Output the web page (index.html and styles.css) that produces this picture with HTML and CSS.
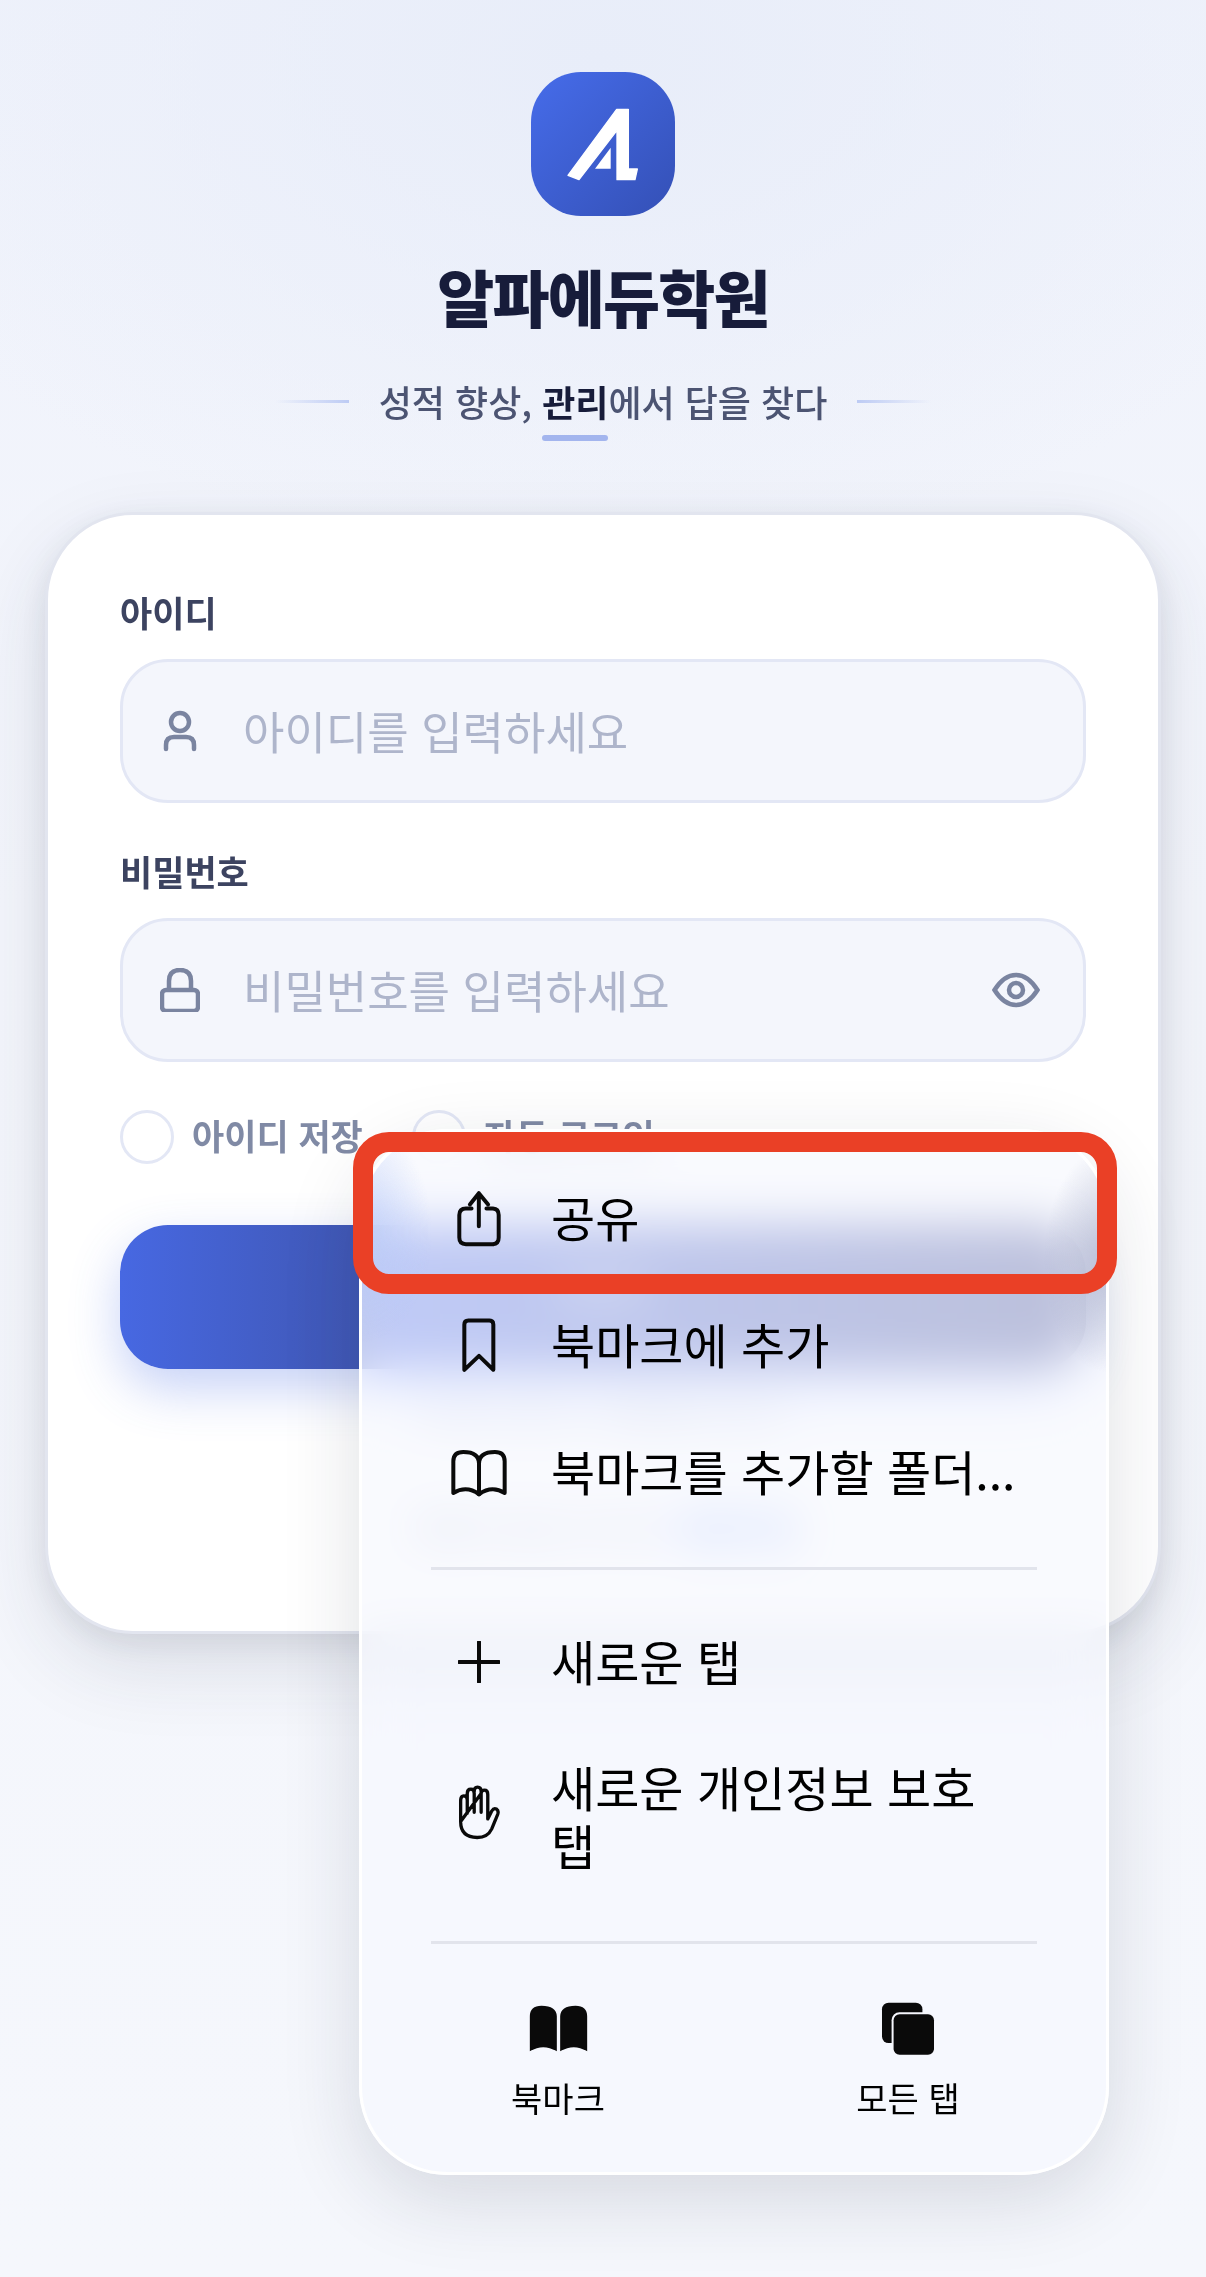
FILE: index.html
```html
<!DOCTYPE html>
<html lang="ko">
<head>
    <meta charset="UTF-8">
    <meta name="viewport" content="width=device-width, initial-scale=1.0">
    <title>알파에듀학원</title>
    <link rel="stylesheet" href="styles.css">
</head>
<body>
    <div class="page">
        <header class="brand">
            <div class="logo">
                <svg viewBox="93 65 432 432" width="144" height="144">
                    <path fill="#fff" stroke="#fff" stroke-width="4" stroke-linejoin="round" d="M350 177H385V356H412L405 388H351V240L237 388L204 375Z"/>
                    <path fill="#fff" d="M332 292V355H285Z"/>
                </svg>
            </div>
            <h1 class="brand-name">알파에듀학원</h1>
            <div class="tagline">
                <span class="tagline-line"></span>
                <p class="tagline-text">성적 향상, <strong class="mark">관리</strong>에서 답을 찾다</p>
                <span class="tagline-line flip"></span>
            </div>
        </header>

        <main class="card">
            <label class="field-label">아이디</label>
            <div class="field">
                <svg class="field-icon" viewBox="0 0 40 44" width="40" height="44">
                    <circle cx="20" cy="13" r="9" fill="none" stroke="#7a84a0" stroke-width="4.5"/>
                    <path d="M6 40V36Q6 28 14 28H26Q34 28 34 36V40" fill="none" stroke="#7a84a0" stroke-width="4.5" stroke-linecap="round"/>
                </svg>
                <span class="placeholder">아이디를 입력하세요</span>
            </div>

            <label class="field-label second">비밀번호</label>
            <div class="field">
                <svg class="field-icon" viewBox="0 0 40 44" width="40" height="44">
                    <rect x="2" y="22" width="36" height="21" rx="4" fill="none" stroke="#7a84a0" stroke-width="4.5"/>
                    <path d="M9 22V13Q9 2 20 2Q31 2 31 13V22" fill="none" stroke="#7a84a0" stroke-width="4.5"/>
                </svg>
                <span class="placeholder">비밀번호를 입력하세요</span>
                <svg class="eye-icon" viewBox="0 0 48 36" width="48" height="36">
                    <path d="M2.500 18Q12 3 24 3Q36 3 45.500 18Q36 33 24 33Q12 33 2.500 18Z" fill="none" stroke="#7a84a0" stroke-width="4.500"/>
                    <circle cx="24" cy="18" r="7" fill="none" stroke="#7a84a0" stroke-width="4.500"/>
                </svg>
            </div>

            <div class="options">
                <span class="radio"></span><span class="option-text">아이디 저장</span>
                <span class="radio auto"></span><span class="option-text">자동 로그인</span>
            </div>

            <button class="login-button">로그인</button>

            <div class="sub-links">아이디 찾기 | 비밀번호 찾기</div>
            <div class="sub-links join">계정이 없으신가요? <strong class="join-link">회원가입</strong></div>
        </main>

        <nav class="menu">
            <a class="menu-row">
                <span class="menu-icon">
                    <svg viewBox="375 210 145 180" width="48" height="60" class="line-icon">
                        <path d="M425 268H408Q388 268 388 288V356Q388 376 408 376H488Q507 376 507 356V288Q507 268 488 268H470"/>
                        <path d="M447 322V222M420 256L447 222L475 256"/>
                    </svg>
                </span>
                <span class="row-text">공유</span>
            </a>
            <a class="menu-row">
                <span class="menu-icon">
                    <svg viewBox="390 600 114 170" width="38" height="57" class="line-icon">
                        <path d="M403 758V622Q403 610 415 610H478Q490 610 490 622V758L447 716Z"/>
                    </svg>
                </span>
                <span class="row-text">북마크에 추가</span>
            </a>
            <a class="menu-row">
                <span class="menu-icon">
                    <svg viewBox="60 28 174 144" width="58" height="48" class="line-icon">
                        <path d="M70 160V65Q70 37 100 37Q147 37 147 72Q147 37 195 37Q224 37 224 65V160Q185 136 147 164Q110 136 70 160Z"/>
                        <path d="M147 72V164"/>
                    </svg>
                </span>
                <span class="row-text">북마크를 추가할 폴더...</span>
            </a>
            <div class="menu-divider"></div>
            <a class="menu-row upper">
                <span class="menu-icon">
                    <svg viewBox="0 0 42 42" width="42" height="42" class="plus-icon">
                        <path d="M1 21H41M21 1V41"/>
                    </svg>
                </span>
                <span class="row-text">새로운 탭</span>
            </a>
            <a class="menu-row tall">
                <span class="menu-icon">
                    <svg viewBox="90 180 130 165" width="43" height="55" class="hand-icon">
                        <path d="M98 290V228Q98 212 108 212Q118 212 118 225M118 265V205Q118 192 129 192Q139 192 139 205V262M139 200Q139 186 149 186Q160 186 160 200V262M160 205Q160 195 170 195Q180 195 180 208V282L192 258Q198 248 206 252Q214 257 210 268L192 312Q180 338 148 338Q98 338 98 290Z"/>
                    </svg>
                </span>
                <span class="row-text">새로운 개인정보 보호<br>탭</span>
            </a>
            <div class="menu-divider last"></div>
            <div class="menu-bottom">
                <a class="bottom-item">
                    <span class="bottom-icon">
                        <svg viewBox="88 76 176 141" width="59" height="47">
                            <path fill="#0a0a0a" d="M90 215V110Q90 78 125 78Q170 78 171 110V215Q130 190 90 215Z"/>
                            <path fill="#0a0a0a" d="M262 215V110Q262 78 227 78Q182 78 181 110V215Q222 190 262 215Z"/>
                        </svg>
                    </span>
                    <span class="bottom-label">북마크</span>
                </a>
                <a class="bottom-item">
                    <span class="bottom-icon">
                        <svg viewBox="1148 68 161 160" width="54" height="53">
                            <rect x="1150" y="70" width="122" height="122" rx="20" fill="#0a0a0a"/>
                            <rect x="1179" y="99" width="134" height="133" rx="24" fill="#f6f7fd"/>
                            <rect x="1185" y="105" width="122" height="122" rx="18" fill="#0a0a0a"/>
                        </svg>
                    </span>
                    <span class="bottom-label">모든 탭</span>
                </a>
            </div>
        </nav>

        <div class="callout"></div>
    </div>
</body>
</html>
```

FILE: styles.css
```css
* {
    box-sizing: border-box;
}
body {
    margin: 0;
    font-family: "Noto Sans CJK KR", "Noto Sans", sans-serif;
}
.page {
    position: relative;
    width: 1206px;
    height: 2277px;
    overflow: hidden;
    background:
        radial-gradient(ellipse 800px 500px at 600px 60px, #e8edf9 0%, rgba(232,237,249,0) 100%),
        linear-gradient(#eff2fb, #f4f6fc 40%, #f5f7fc);
}

/* header */
.brand {
    display: flex;
    flex-direction: column;
    align-items: center;
    padding-top: 72px;
}
.logo {
    width: 144px;
    height: 144px;
    border-radius: 50px;
    background: linear-gradient(135deg, #466cea, #3450b6);
}
.logo svg {
    display: block;
}
.brand-name {
    margin: 35px 0 0;
    font-size: 62px;
    line-height: 90px;
    font-weight: 900;
    letter-spacing: -1.8px;
    color: #171c3a;
}
.tagline {
    display: flex;
    align-items: center;
    gap: 30px;
    margin-top: 35px;
}
.tagline-line {
    width: 74px;
    height: 3px;
    background: linear-gradient(90deg, rgba(190,204,245,0), #bdcbf4);
}
.tagline-line.flip {
    transform: scaleX(-1);
}
.tagline-text {
    margin: 0;
    font-size: 36px;
    line-height: 50px;
    font-weight: 500;
    color: #4c5472;
}
.mark {
    position: relative;
    font-weight: 700;
    color: #171c3a;
}
.mark::after {
    content: "";
    position: absolute;
    left: 0;
    right: 0;
    top: 60px;
    height: 6px;
    border-radius: 3px;
    background: #a3b5ee;
}

/* login card */
.card {
    margin: 86px 45px 0;
    height: 1122px;
    padding: 75px 72px 0;
    background: #fff;
    border: 3px solid #e2e5ef;
    border-radius: 88px;
    box-shadow: 0 8px 26px rgba(40,45,70,0.08), 0 30px 80px rgba(40,45,70,0.13);
}
.field-label {
    display: block;
    font-size: 35px;
    line-height: 44px;
    font-weight: 700;
    color: #3c4360;
}
.field-label.second {
    margin-top: 46px;
}
.field {
    display: flex;
    align-items: center;
    height: 144px;
    margin-top: 25px;
    padding-left: 37px;
    padding-right: 43px;
    background: #f4f6fc;
    border: 3px solid #e3e7f5;
    border-radius: 48px;
}
.field-icon {
    flex: none;
}
.placeholder {
    margin: 0 0 2px 43px;
    font-size: 45px;
    color: #aeb5cb;
}
.eye-icon {
    margin-left: auto;
}
.options {
    display: flex;
    align-items: center;
    height: 54px;
    margin-top: 48px;
}
.radio {
    width: 54px;
    height: 54px;
    border: 3px solid #e3e7f5;
    border-radius: 50%;
    background: #fff;
}
.radio.auto {
    margin-left: 49px;
}
.option-text {
    margin: 0 0 5px 18px;
    font-size: 35px;
    line-height: 44px;
    font-weight: 700;
    color: #808aa5;
}
.login-button {
    display: block;
    width: 100%;
    height: 144px;
    margin-top: 61px;
    padding: 0 0 20px;
    border: none;
    border-radius: 48px;
    font-family: inherit;
    font-size: 30px;
    font-weight: 700;
    color: #fff;
    background: linear-gradient(90deg, #4768e2, #3f55ae 28%, #2b3264 100%);
    box-shadow: 0 20px 50px rgba(70,105,230,0.3);
}
.sub-links {
    margin-top: 22px;
    text-align: center;
    font-size: 32px;
    line-height: 40px;
    color: #7a84a0;
}
.sub-links.join {
    margin-top: 76px;
}
.join-link {
    color: #4a6fe9;
}

/* browser menu */
.menu {
    position: absolute;
    left: 359px;
    top: 1129px;
    width: 750px;
    height: 1046px;
    padding: 23px 0 0;
    border: 3px solid #fff;
    border-radius: 88px;
    background: rgba(247,248,254,0.72);
    -webkit-backdrop-filter: blur(24px) saturate(1.6);
    backdrop-filter: blur(24px) saturate(1.6);
    box-shadow: 0 24px 80px rgba(30,35,60,0.14);
    color: #000;
}
/* tint along the glass edges, where the button colour bleeds round the corners */
.menu::before {
    content: "";
    position: absolute;
    inset: 0;
    z-index: -1;
    border-radius: 85px;
    background:
        radial-gradient(ellipse 62px 112px at 100% 128px, rgba(176,182,208,0.85), rgba(176,182,208,0)),
        radial-gradient(ellipse 70px 110px at 0 100px, rgba(186,203,248,0.8), rgba(186,203,248,0));
}
.menu-row {
    display: flex;
    align-items: center;
    gap: 24px;
    height: 127px;
    padding-left: 69px;
    font-size: 48px;
    line-height: 58px;
}
.menu-row.upper {
    height: 121px;
}
.menu-row.tall {
    height: 180px;
}
.row-text {
    padding-bottom: 5px;
}
.upper .row-text {
    padding-bottom: 3px;
}
.tall .row-text {
    padding: 6px 0 0;
}
.menu-icon {
    display: flex;
    flex: none;
    align-items: center;
    justify-content: center;
    width: 96px;
}
.line-icon {
    fill: none;
    stroke: #0a0a0a;
    stroke-width: 12;
    stroke-linecap: round;
    stroke-linejoin: round;
}
.plus-icon {
    fill: none;
    stroke: #0a0a0a;
    stroke-width: 4;
    stroke-linecap: round;
}
.hand-icon {
    fill: none;
    stroke: #0a0a0a;
    stroke-width: 10;
    stroke-linecap: round;
    stroke-linejoin: round;
}
.menu-divider {
    height: 3px;
    margin: 31px 69px;
    background: #e2e4ec;
}
.menu-divider.last {
    margin: 39px 69px 0;
}
.menu-bottom {
    display: grid;
    grid-template-columns: 350px 350px;
    padding: 61px 21px 0;
}
.bottom-item {
    display: flex;
    flex-direction: column;
    align-items: center;
    font-size: 34px;
    line-height: 48px;
}
.bottom-icon {
    display: flex;
    align-items: center;
    height: 47px;
}
.bottom-label {
    margin-top: 22px;
}

/* red annotation box */
.callout {
    position: absolute;
    left: 353px;
    top: 1132px;
    width: 764px;
    height: 162px;
    border: 20px solid #ea4026;
    border-radius: 36px;
}
```
